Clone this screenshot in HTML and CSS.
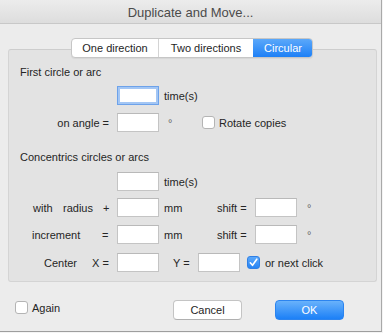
FILE: index.html
```html
<!DOCTYPE html>
<html>
<head>
<meta charset="utf-8">
<link rel="stylesheet" href="styles.css">
</head>
<body>
<div class="window">
  <div class="titlebar">Duplicate and Move...</div>
  <div class="segmented">
    <span class="seg seg-one">One direction</span>
    <span class="seg seg-two">Two directions</span>
    <span class="seg seg-circ active">Circular</span>
  </div>
  <div class="box">
    <div class="heading">First circle or arc</div>
    <div class="row row-b">
      <span class="lab"></span>
      <span class="field focused"></span>
      <span class="unit">time(s)</span>
    </div>
    <div class="row row-c">
      <span class="lab lab-right">on angle =</span>
      <span class="field"></span>
      <span class="deg">°</span>
      <span class="cb"></span>
      <span class="cb-label">Rotate copies</span>
    </div>
    <div class="heading heading2">Concentrics circles or arcs</div>
    <div class="row row-e">
      <span class="lab"></span>
      <span class="field"></span>
      <span class="unit">time(s)</span>
    </div>
    <div class="row row-f">
      <span class="lab"><span class="w-with">with</span><span class="w-radius">radius</span><span>+</span></span>
      <span class="field"></span>
      <span class="unit mm">mm</span>
      <span class="shift">shift =</span>
      <span class="field"></span>
      <span class="deg2">°</span>
    </div>
    <div class="row row-g">
      <span class="lab"><span class="w-incr">increment</span><span>=</span></span>
      <span class="field"></span>
      <span class="unit mm">mm</span>
      <span class="shift">shift =</span>
      <span class="field"></span>
      <span class="deg2">°</span>
    </div>
    <div class="row row-h">
      <span class="lab"><span class="w-center">Center</span><span>X =</span></span>
      <span class="field"></span>
      <span class="w-y">Y =</span>
      <span class="field"></span>
      <span class="cb checked"><svg width="13" height="13" viewBox="0 0 13 13"><path d="M3.3 6.8 L5.5 9.3 L9.8 3.2" fill="none" stroke="#fff" stroke-width="1.6" stroke-linecap="round" stroke-linejoin="round"/></svg></span>
      <span class="cb-label2">or next click</span>
    </div>
  </div>
  <div class="footer">
    <div class="again">
      <span class="cb"></span>
      <span class="cb-label">Again</span>
    </div>
    <span class="btn cancel">Cancel</span>
    <span class="btn ok">OK</span>
  </div>
</div>
</body>
</html>
```
FILE: styles.css
```css
html, body {
  margin: 0;
  padding: 0;
  background: #f4f4f4;
}
.window {
  width: 381px;
  height: 331px;
  background: #ececec;
  border-right: 1px solid #a9a9a9;
  border-bottom: 1px solid #9e9e9e;
  font-family: "Liberation Sans", Arial, sans-serif;
  font-size: 11px;
  color: #252525;
  overflow: hidden;
}
.titlebar {
  height: 23px;
  border-bottom: 1px solid #c8c8c8;
  background: linear-gradient(#ececec, #dddddd);
  text-align: center;
  font-size: 13px;
  line-height: 25px;
  color: #4b4b4b;
  overflow: hidden;
}
.segmented {
  position: relative;
  z-index: 1;
  display: flex;
  width: 242px;
  height: 20px;
  margin: 14px 0 0 71px;
  box-sizing: border-box;
  border: 1px solid #c6c6c6;
  border-radius: 4px;
  background: #fff;
  overflow: hidden;
  box-shadow: 0 1px 1px rgba(0,0,0,0.06);
}
.seg {
  display: block;
  height: 18px;
  line-height: 18px;
  text-align: center;
  color: #1e1e1e;
  flex: none;
}
.seg-one { width: 86px; border-right: 1px solid #d4d4d4; }
.seg-two { width: 94px; }
.seg-circ { width: 60px; }
.seg.active {
  background: linear-gradient(#5ba8fa, #1e80f6);
  color: #fff;
}
.box {
  margin: -9px 4px 0 8px;
  background: #e3e3e3;
  border: 1px solid #d4d4d4;
  border-top-color: #cdcdcd;
  border-radius: 3px;
  padding: 15px 0 9px 0;
}
.heading {
  height: 14px;
  line-height: 14px;
  padding-left: 11px;
}
.heading2 { margin-top: 18px; }
.row {
  display: flex;
  align-items: center;
  height: 19px;
  line-height: 14px;
}
.row-b { margin-top: 7px; }
.row-c { margin-top: 8px; }
.row-e { margin-top: 8px; }
.row-f { margin-top: 7px; }
.row-g { margin-top: 8px; }
.row-h { margin-top: 9px; }
.lab {
  width: 108px;
  flex: none;
  display: flex;
  box-sizing: border-box;
}
.lab-right {
  justify-content: flex-end;
  padding-right: 8px;
}
.field {
  width: 42px;
  height: 19px;
  flex: none;
  box-sizing: border-box;
  background: #fff;
  border: 1px solid #c4c4c4;
  border-top-color: #b9b9b9;
}
.field.focused {
  border-color: #6da2ea;
  box-shadow: inset 0 0 0 2px #a3c6f4;
}
.unit { margin-left: 5px; }
.mm { width: 53px; flex: none; }
.shift { width: 38px; flex: none; }
.deg {
  margin-left: 9px;
  width: 34px;
  flex: none;
  color: #666;
}
.deg2 {
  margin-left: 10px;
  color: #666;
}
.w-with { margin-left: 24px; width: 30px; }
.w-radius { width: 40px; }
.w-incr { margin-left: 23px; width: 70px; }
.w-center { margin-left: 35px; width: 48px; }
.w-y { margin-left: 14px; width: 25px; flex: none; }
.cb {
  display: block;
  width: 13px;
  height: 13px;
  flex: none;
  box-sizing: border-box;
  background: #fff;
  border: 1px solid #b4b4b4;
  border-radius: 3px;
}
.cb.checked {
  margin-left: 7px;
  background: linear-gradient(#5ba8fa, #2784f4);
  border-color: #2f80e6;
}
.cb.checked svg {
  display: block;
  margin: -1px;
}
.cb-label { margin-left: 4px; }
.cb-label2 { margin-left: 5px; }
.footer {
  display: flex;
  align-items: center;
  height: 20px;
  margin-top: 18px;
  padding-left: 15px;
}
.again {
  display: flex;
  align-items: center;
  width: 158px;
  flex: none;
  margin-top: -5px;
}
.btn {
  display: block;
  width: 69px;
  height: 20px;
  flex: none;
  box-sizing: border-box;
  border-radius: 4px;
  text-align: center;
  line-height: 18px;
}
.cancel {
  margin-right: 33px;
  background: #fff;
  border: 1px solid #c4c4c4;
  border-bottom-color: #b0b0b0;
}
.ok {
  background: linear-gradient(#69b2fb, #1c80f7);
  border: 1px solid #2c84ef;
  color: #fff;
}
```
